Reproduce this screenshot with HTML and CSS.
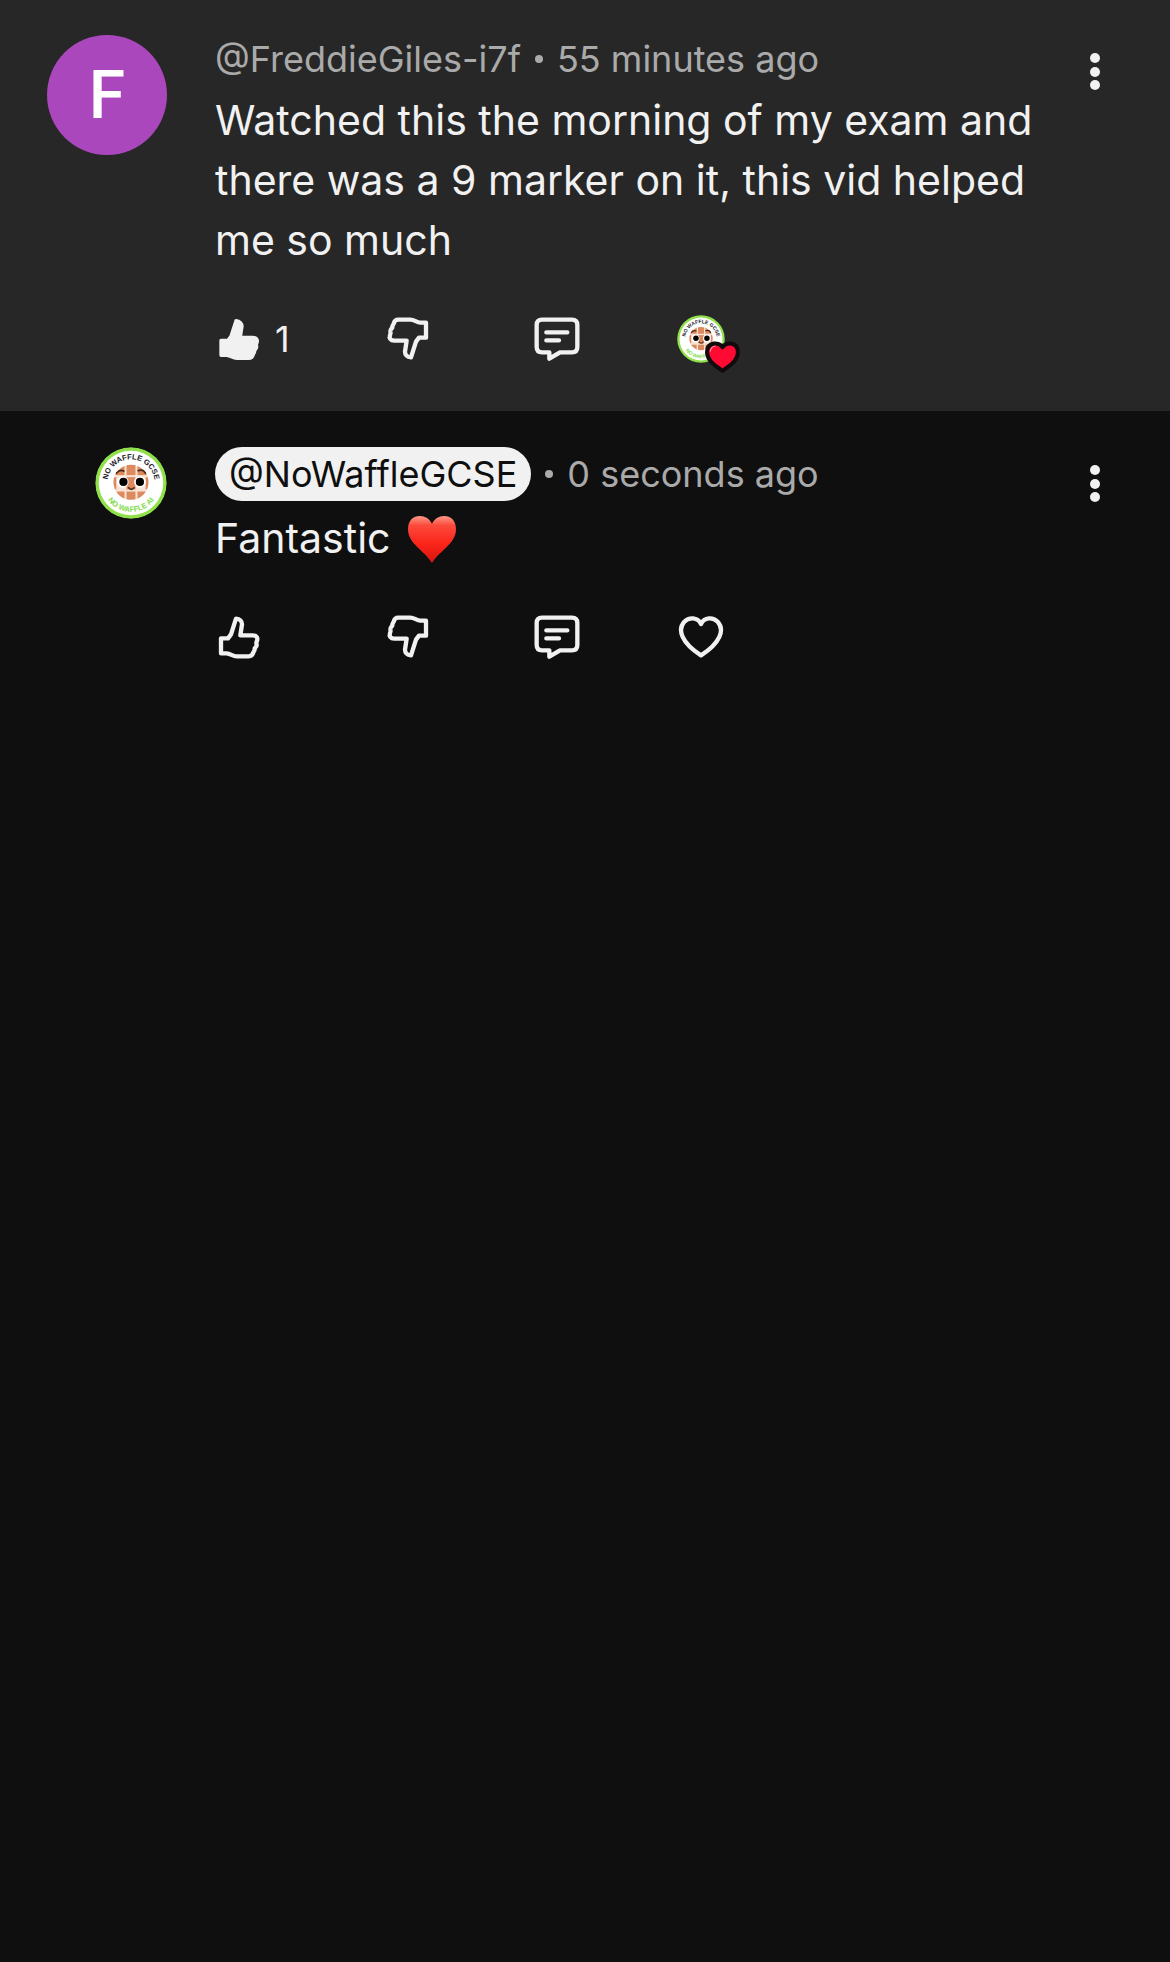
FILE: index.html
```html
<!DOCTYPE html>
<html lang="en">
<head>
    <meta charset="UTF-8">
    <meta name="viewport" content="width=device-width, initial-scale=1.0">
    <title>Comments</title>
    <link rel="stylesheet" href="styles.css">
</head>
<body>
    <!-- shared icons -->
    <svg class="sprite" aria-hidden="true">
        <symbol id="thumb" viewBox="0 0 144 144">
            <path d="M18 76H39L48 64L63 17C75 18 81 26 81 34L76 67H113C125 67 129 75 126 83C124 87 123 90 125 95C126 100 121 103 119 106C120 111 117 115 115 118C113 127 107 130 101 130H65C53 130 47 122 35 121H18Z"/>
        </symbol>
        <symbol id="reply" viewBox="0 0 144 144">
            <path d="M27 14H117Q133 14 133 30V96Q133 112 117 112H81L49 131V112H27Q11 112 11 96V30Q11 14 27 14Z"/>
            <path d="M40 52H103M40 76H78"/>
        </symbol>
        <symbol id="heart" viewBox="0 0 144 144">
            <path d="M72 33C62 12 36 12 22 26C0 50 14 90 72 127C130 90 144 50 122 26C108 12 82 12 72 33Z"/>
        </symbol>
        <symbol id="dots" viewBox="0 0 48 48">
            <circle cx="24" cy="10" r="5"/>
            <circle cx="24" cy="24" r="5"/>
            <circle cx="24" cy="37" r="5"/>
        </symbol>
        <symbol id="logo" viewBox="0 0 210 210">
            <defs>
                <path id="arcTop" d="M39 125A69 69 0 1 1 171 125"/>
                <path id="arcBottom" d="M21 105A84 84 0 0 0 189 105"/>
                <clipPath id="waffle"><circle cx="105" cy="103" r="51"/></clipPath>
            </defs>
            <circle cx="105" cy="105" r="104" fill="#8fe04b"/>
            <circle cx="105" cy="105" r="94" fill="#fff"/>
            <g clip-path="url(#waffle)">
                <rect x="50" y="48" width="110" height="110" fill="#f7e3d5"/>
                <g fill="#dd8a5f">
                    <rect x="50" y="50" width="36" height="32"/>
                    <rect x="92" y="50" width="26" height="32"/>
                    <rect x="124" y="50" width="36" height="32"/>
                    <rect x="50" y="88" width="12" height="36"/>
                    <rect x="92" y="88" width="26" height="36"/>
                    <rect x="148" y="88" width="12" height="36"/>
                    <rect x="50" y="130" width="36" height="30"/>
                    <rect x="92" y="130" width="26" height="30"/>
                    <rect x="124" y="130" width="36" height="30"/>
                </g>
            </g>
            <circle cx="81" cy="102" r="17" fill="#fff"/>
            <circle cx="131" cy="102" r="17" fill="#fff"/>
            <circle cx="83" cy="102" r="12" fill="#000"/>
            <circle cx="131" cy="102" r="12" fill="#000"/>
            <path d="M63 76Q73 64 84 70M126 69Q140 64 147 76M98 119Q106 128 114 119" fill="none" stroke="#4a281a" stroke-width="5" stroke-linecap="round"/>
            <text class="logo-top"><textPath href="#arcTop" startOffset="50%">NO WAFFLE GCSE</textPath></text>
            <text class="logo-bottom"><textPath href="#arcBottom" startOffset="50%">NO WAFFLE AI</textPath></text>
        </symbol>
    </svg>

    <main>
        <article class="comment comment-main">
            <div class="avatar-col">
                <div class="avatar letter">F</div>
            </div>
            <div class="content">
                <div class="meta">
                    <span>@FreddieGiles-i7f</span>
                    <span class="dot"></span>
                    <span>55 minutes ago</span>
                </div>
                <p class="text">Watched this the morning of my exam and there was a 9 marker on it, this vid helped me so much</p>
                <div class="actions">
                    <button class="action filled" aria-label="Like"><svg><use href="#thumb"/></svg><span>1</span></button>
                    <button class="action down" aria-label="Dislike"><svg><use href="#thumb"/></svg></button>
                    <button class="action" aria-label="Reply"><svg><use href="#reply"/></svg></button>
                    <button class="action hearted" aria-label="Loved by NoWaffleGCSE">
                        <svg class="mini-logo"><use href="#logo"/></svg>
                        <svg class="badge" viewBox="0 0 36 34">
                            <path d="M18 7C15 2 3 1 3 12C3 20 11 25 18 30C25 25 33 20 33 12C33 1 21 2 18 7Z" fill="#ff0a33" stroke="#120b0d" stroke-width="4" stroke-linejoin="round"/>
                            <path d="M6 11Q7 6 11 6" fill="none" stroke="#ff8a9c" stroke-width="1" stroke-linecap="round"/>
                        </svg>
                    </button>
                </div>
            </div>
            <button class="menu" aria-label="More options"><svg><use href="#dots"/></svg></button>
        </article>

        <article class="comment comment-reply">
            <div class="avatar-col">
                <svg class="avatar small"><use href="#logo"/></svg>
            </div>
            <div class="content">
                <div class="meta">
                    <a class="chip" href="#">@NoWaffleGCSE</a>
                    <span class="dot"></span>
                    <span>0 seconds ago</span>
                </div>
                <p class="text">Fantastic
                    <svg class="emoji" viewBox="0 0 50 50" role="img" aria-label="red heart">
                        <defs>
                            <linearGradient id="red" x1="0" y1="0" x2="0" y2="1">
                                <stop offset="0" stop-color="#ff9a88"/>
                                <stop offset="0.2" stop-color="#fb4a3c"/>
                                <stop offset="0.6" stop-color="#fb2419"/>
                                <stop offset="1" stop-color="#d5150f"/>
                            </linearGradient>
                        </defs>
                        <path d="M25 10C21 -1 1 -2 1 15C1 30 17 36 25 49C33 36 49 30 49 15C49 -2 29 -1 25 10Z" fill="url(#red)"/>
                    </svg>
                </p>
                <div class="actions">
                    <button class="action" aria-label="Like"><svg><use href="#thumb"/></svg></button>
                    <button class="action down" aria-label="Dislike"><svg><use href="#thumb"/></svg></button>
                    <button class="action" aria-label="Reply"><svg><use href="#reply"/></svg></button>
                    <button class="action" aria-label="Heart"><svg><use href="#heart"/></svg></button>
                </div>
            </div>
            <button class="menu" aria-label="More options"><svg><use href="#dots"/></svg></button>
        </article>
    </main>
</body>
</html>
```

FILE: styles.css
```css
* {
    box-sizing: border-box;
}
body {
    margin: 0;
    min-height: 100vh;
    background-color: #0f0f0f;
    color: #f1f1f1;
    font-family: Inter, "Liberation Sans", sans-serif;
}
.sprite {
    position: absolute;
    width: 0;
    height: 0;
}
.comment {
    display: flex;
    align-items: flex-start;
    padding: 36px 51px 48px 47px;
}
.comment-main {
    padding-top: 35px;
    background-color: #272727;
}
.avatar-col {
    display: flex;
    justify-content: flex-end;
    flex: 0 0 120px;
    margin-right: 48px;
}
.avatar {
    display: flex;
    align-items: center;
    justify-content: center;
    width: 120px;
    height: 120px;
    border-radius: 50%;
}
.letter {
    background-color: #aa47bc;
    color: #fff;
    font-family: Roboto, sans-serif;
    font-size: 66px;
    font-weight: 500;
}
.small {
    width: 72px;
    height: 72px;
}
.content {
    flex: 1;
    min-width: 0;
}
.meta {
    display: flex;
    align-items: center;
    min-height: 48px;
    color: #aaa;
    font-size: 36px;
    line-height: 48px;
}
.dot {
    width: 8px;
    height: 8px;
    margin: 0 14px;
    border-radius: 50%;
    background-color: #aaa;
}
.chip {
    padding: 3px 14px;
    border-radius: 27px;
    background-color: #f1f1f1;
    color: #0f0f0f;
    text-decoration: none;
}
.text {
    margin: 7px 0 45px;
    font-size: 41px;
    line-height: 60px;
}
.emoji {
    width: 50px;
    height: 50px;
    margin-left: 5px;
    vertical-align: -11px;
}
.actions {
    display: grid;
    grid-template-columns: 169px 149px 144px auto;
    justify-content: start;
}
.action, .menu {
    display: flex;
    align-items: center;
    justify-self: start;
    height: 48px;
    padding: 0;
    border: none;
    background: none;
    color: #f1f1f1;
    font-family: inherit;
    font-size: 36px;
    cursor: pointer;
}
.action svg {
    width: 48px;
    height: 48px;
    fill: none;
    stroke: currentColor;
    stroke-width: 13px;
    stroke-linejoin: round;
    stroke-linecap: round;
}
.action.filled svg {
    margin-right: 12px;
    fill: currentColor;
    stroke-width: 10px;
}
.action.down svg {
    transform: rotate(180deg);
}
.action.hearted {
    position: relative;
}
.action.hearted svg {
    stroke: none;
}
.action.hearted .badge {
    position: absolute;
    left: 27px;
    top: 25px;
    width: 37px;
    height: 35px;
}
.menu {
    margin-top: 13px;
}
.menu svg {
    width: 48px;
    height: 48px;
    fill: currentColor;
}
.logo-top, .logo-bottom {
    font-family: "Liberation Sans", sans-serif;
    font-size: 22px;
    font-weight: bold;
    text-anchor: middle;
    fill: #1d1d2b;
}
.logo-bottom {
    fill: #7ddb4a;
}
```
